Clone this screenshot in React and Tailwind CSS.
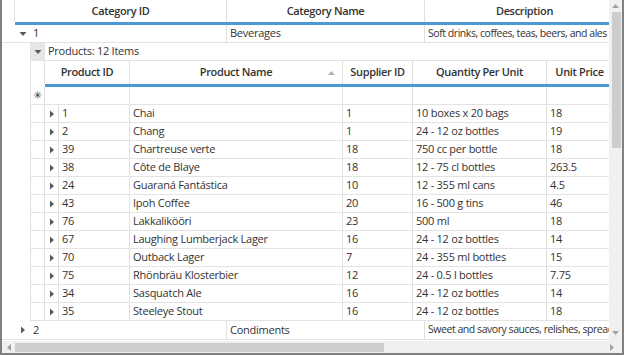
import React from 'react';

const products = [
  ['1', 'Chai', '1', '10 boxes x 20 bags', '18'],
  ['2', 'Chang', '1', '24 - 12 oz bottles', '19'],
  ['39', 'Chartreuse verte', '18', '750 cc per bottle', '18'],
  ['38', 'Côte de Blaye', '18', '12 - 75 cl bottles', '263.5'],
  ['24', 'Guaraná Fantástica', '10', '12 - 355 ml cans', '4.5'],
  ['43', 'Ipoh Coffee', '20', '16 - 500 g tins', '46'],
  ['76', 'Lakkalikööri', '23', '500 ml', '18'],
  ['67', 'Laughing Lumberjack Lager', '16', '24 - 12 oz bottles', '14'],
  ['70', 'Outback Lager', '7', '24 - 355 ml bottles', '15'],
  ['75', 'Rhönbräu Klosterbier', '12', '24 - 0.5 l bottles', '7.75'],
  ['34', 'Sasquatch Ale', '16', '24 - 12 oz bottles', '14'],
  ['35', 'Steeleye Stout', '16', '24 - 12 oz bottles', '18'],
];

function TriRight() {
  return (
    <svg width="6" height="8" viewBox="0 0 6 8">
      <path d="M1 0.5 L5 4 L1 7.5 Z" fill="#5a5a5a" />
    </svg>
  );
}

function TriDown() {
  return (
    <svg width="8" height="6" viewBox="0 0 8 6">
      <path d="M0.5 1 L7.5 1 L4 5 Z" fill="#5a5a5a" />
    </svg>
  );
}

function HeaderCell({ w, children, sort }) {
  return (
    <div className={`${w} shrink-0 h-full border-r border-[#e0e0e0] flex items-center justify-center relative font-semibold tracking-[-0.35px] text-[#333]`}>
      {children}
      {sort && (
        <svg className="absolute right-[7px] top-[10px]" width="7" height="4" viewBox="0 0 7 4">
          <path d="M0 4 L3.5 0 L7 4 Z" fill="#a9b4bf" />
        </svg>
      )}
    </div>
  );
}

function Cell({ w, children, tight }) {
  return (
    <div className={`${w} ${tight ? 'text-[10.5px] tracking-[-0.45px]' : ''} shrink-0 h-full border-r border-[#e0e0e0] flex items-center pl-[3px] overflow-hidden whitespace-nowrap`}>
      {children}
    </div>
  );
}

export default function App() {
  return (
    <div
      className="w-[624px] h-[355px] bg-white border-l-2 border-r-2 border-b-2 border-[#808080] flex flex-col overflow-hidden text-[11px] tracking-[-0.25px] text-[#333]"
      style={{ fontFamily: '"Open Sans", "Noto Sans", sans-serif' }}
    >
      <div className="flex h-[341px]">
        {/* grid content */}
        <div className="w-[607px] shrink-0 overflow-hidden">
          <div className="w-[700px]">
            {/* top header */}
            <div className="flex h-[22px]">
              <div className="w-[13px] shrink-0 h-full border-r border-[#e0e0e0]" />
              <HeaderCell w="w-[212px]">Category ID</HeaderCell>
              <HeaderCell w="w-[198px]">Category Name</HeaderCell>
              <HeaderCell w="w-[200px]">Description</HeaderCell>
            </div>
            <div className="flex h-[3px]">
              <div className="w-[13px] shrink-0" />
              <div className="flex-1 bg-[#4a9ad6]" />
            </div>

            {/* row 1 */}
            <div className="flex h-[18px] border-b border-[#e3e3e3]">
              <div className="w-[13px] shrink-0" />
              <div className="w-[15px] shrink-0 flex items-center justify-center"><TriDown /></div>
              <Cell w="w-[197px]">1</Cell>
              <Cell w="w-[198px]">Beverages</Cell>
              <Cell w="w-[200px]" tight>Soft drinks, coffees, teas, beers, and ales</Cell>
            </div>

            {/* nested grid */}
            <div className="flex">
              <div className="w-[28px] shrink-0" />
              <div className="flex-1 border-l border-[#e0e0e0]">
                {/* caption */}
                <div className="flex h-[18px] border-b border-[#e3e3e3]">
                  <div className="w-[14px] shrink-0 bg-[#e6e6e6] flex items-center justify-center"><TriDown /></div>
                  <div className="pl-[3px] flex items-center">Products: 12 Items</div>
                </div>
                {/* header */}
                <div className="flex h-[23px]">
                  <div className="w-[14px] shrink-0 h-full border-r border-[#e0e0e0]" />
                  <HeaderCell w="w-[85px]">Product ID</HeaderCell>
                  <HeaderCell w="w-[213px]" sort>Product Name</HeaderCell>
                  <HeaderCell w="w-[70px]">Supplier ID</HeaderCell>
                  <HeaderCell w="w-[134px]">Quantity Per Unit</HeaderCell>
                  <HeaderCell w="w-[66px]">Unit Price</HeaderCell>
                </div>
                <div className="flex h-[3px]">
                  <div className="w-[14px] shrink-0" />
                  <div className="flex-1 bg-[#4a9ad6]" />
                </div>
                {/* add new row */}
                <div className="flex h-[18px] border-b border-[#e3e3e3]">
                  <div className="w-[14px] shrink-0 h-full border-r border-[#e0e0e0] flex items-center justify-center text-[11px] text-[#444]">✳</div>
                  <Cell w="w-[85px]" />
                  <Cell w="w-[213px]" />
                  <Cell w="w-[70px]" />
                  <Cell w="w-[134px]" />
                  <Cell w="w-[66px]" />
                </div>
                {products.map((p) => (
                  <div key={p[0]} className="flex h-[18px] border-b border-[#e3e3e3]">
                    <div className="w-[14px] shrink-0 h-full border-r border-[#e0e0e0]" />
                    <div className="w-[14px] shrink-0 h-full border-r border-[#e0e0e0] flex items-center justify-center"><TriRight /></div>
                    <Cell w="w-[71px]">{p[0]}</Cell>
                    <Cell w="w-[213px]">{p[1]}</Cell>
                    <Cell w="w-[70px]">{p[2]}</Cell>
                    <Cell w="w-[134px]">{p[3]}</Cell>
                    <Cell w="w-[66px]">{p[4]}</Cell>
                  </div>
                ))}
              </div>
            </div>

            {/* row 2 */}
            <div className="flex h-[19px] border-b border-[#e3e3e3]">
              <div className="w-[13px] shrink-0" />
              <div className="w-[15px] shrink-0 flex items-center justify-center"><TriRight /></div>
              <Cell w="w-[197px]">2</Cell>
              <Cell w="w-[198px]">Condiments</Cell>
              <Cell w="w-[200px]" tight>Sweet and savory sauces, relishes, spreads, and seasonings</Cell>
            </div>
          </div>
        </div>

        {/* vertical scrollbar */}
        <div className="w-[13px] shrink-0 bg-[#f0f0f0] flex flex-col items-center">
          <div className="h-[12px] flex items-center justify-center">
            <svg width="7" height="4" viewBox="0 0 7 4"><path d="M0 4 L3.5 0 L7 4 Z" fill="#a3a3a3" /></svg>
          </div>
          <div className="w-[9px] h-[136px] bg-[#cdcdcd] ml-[1px]" />
          <div className="flex-1" />
          <div className="h-[16px] flex items-center justify-center">
            <svg width="7" height="4" viewBox="0 0 7 4"><path d="M0 0 L3.5 4 L7 0 Z" fill="#a3a3a3" /></svg>
          </div>
        </div>
      </div>

      {/* horizontal scrollbar */}
      <div className="h-[12px] bg-[#f0f0f0] flex items-center">
        <div className="w-[13px] shrink-0 flex items-center justify-center">
          <svg width="4" height="7" viewBox="0 0 4 7"><path d="M4 0 L0 3.5 L4 7 Z" fill="#a3a3a3" /></svg>
        </div>
        <div className="w-[369px] h-[9px] bg-[#cdcdcd]" />
        <div className="flex-1" />
        <div className="w-[20px] shrink-0 flex items-center justify-center">
          <svg width="4" height="7" viewBox="0 0 4 7"><path d="M0 0 L4 3.5 L0 7 Z" fill="#a3a3a3" /></svg>
        </div>
      </div>
    </div>
  );
}
